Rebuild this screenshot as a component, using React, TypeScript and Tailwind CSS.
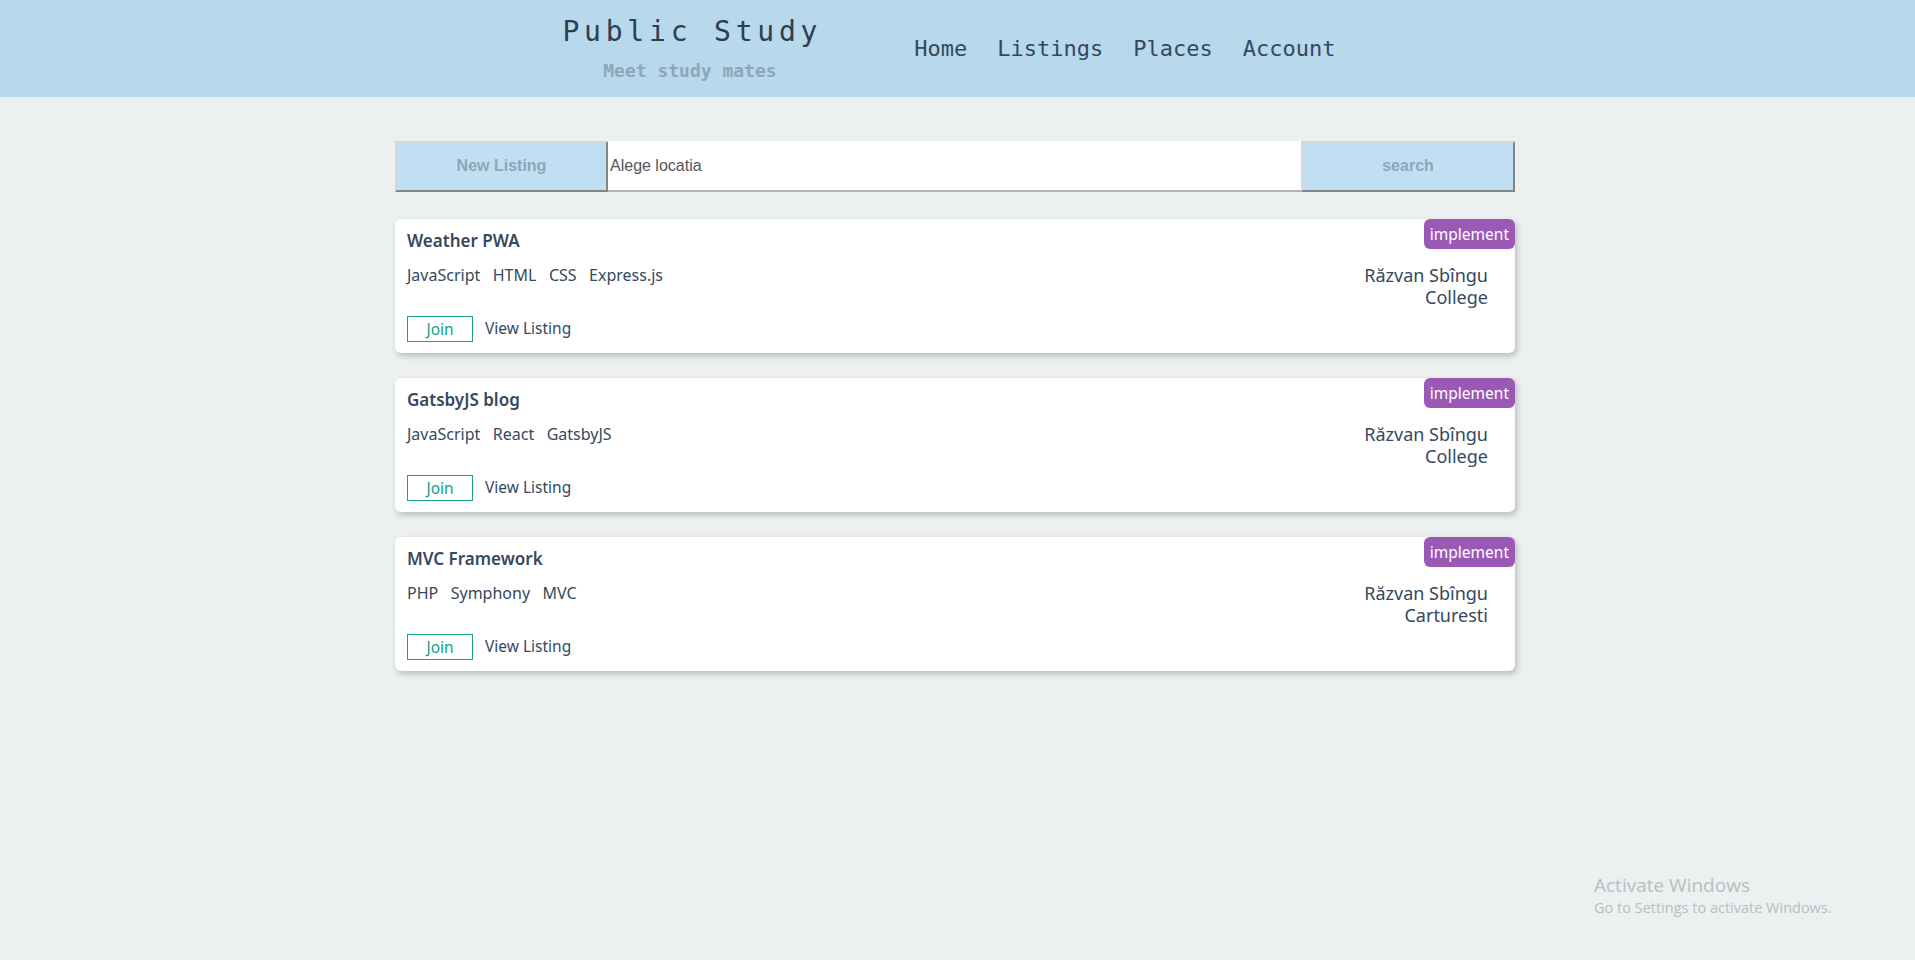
import React from "react";

type Listing = {
  title: string;
  tags: string[];
  author: string;
  place: string;
  kind: string;
};

const listings: Listing[] = [
  {
    title: "Weather PWA",
    tags: ["JavaScript", "HTML", "CSS", "Express.js"],
    author: "Răzvan Sbîngu",
    place: "College",
    kind: "implement",
  },
  {
    title: "GatsbyJS blog",
    tags: ["JavaScript", "React", "GatsbyJS"],
    author: "Răzvan Sbîngu",
    place: "College",
    kind: "implement",
  },
  {
    title: "MVC Framework",
    tags: ["PHP", "Symphony", "MVC"],
    author: "Răzvan Sbîngu",
    place: "Carturesti",
    kind: "implement",
  },
];

const mono = "font-['DejaVu_Sans_Mono','Liberation_Mono',monospace]";
const sans = "font-['Noto_Sans','Open_Sans',sans-serif]";

function ListingCard({ item }: { item: Listing }) {
  return (
    <div className="relative bg-white rounded-md shadow-[2px_3px_6px_rgba(0,0,0,0.22)] pt-[10px] pb-[10px] pl-[12px] pr-[27px] h-[134px]">
      <span className="absolute top-0 right-0 bg-[#9b59b6] text-white text-[15.5px] leading-[30px] px-[6px] rounded-md">
        {item.kind}
      </span>
      <h2 className="text-[17px] leading-[24px] font-semibold text-[#34495e]">
        {item.title}
      </h2>
      <div className="mt-[11px] flex justify-between items-start h-[44px]">
        <div className="flex gap-[12.5px] text-[16px] leading-[22px] text-[#34495e]">
          {item.tags.map((t) => (
            <span key={t}>{t}</span>
          ))}
        </div>
        <div className="text-right text-[18px] leading-[22px] text-[#34495e]">
          <div>{item.author}</div>
          <div>{item.place}</div>
        </div>
      </div>
      <div className="mt-[8px] flex items-center gap-[12px] text-[15.5px]">
        <button className="w-[66px] h-[26px] border border-[#16a085] text-[#16a085] leading-[24px]">
          Join
        </button>
        <a className="text-[#34495e]">View Listing</a>
      </div>
    </div>
  );
}

export default function App() {
  return (
    <div className={`min-h-screen bg-[#ecf0f1] ${sans} relative`}>
      {/* header */}
      <header className="h-[97px] bg-[#b8d8eb] flex items-center justify-center pr-[22px]">
        <div className={`flex flex-col items-center ${mono}`}>
          <h1 className="text-[28px] leading-[28px] tracking-[4.8px] text-[#2c3e50] pl-[4.8px]">
            Public Study
          </h1>
          <p className="mt-[16px] text-[18px] leading-[18px] font-bold text-[#8fa5ba]">
            Meet study mates
          </p>
        </div>
        <nav className={`ml-[92px] flex gap-[30px] text-[22px] text-[#34495e] ${mono}`}>
          <a>Home</a>
          <a>Listings</a>
          <a>Places</a>
          <a>Account</a>
        </nav>
      </header>

      <div className="flex justify-center pr-[5px]">
        <main className="w-[1120px] pt-[44px]">
          {/* search bar */}
          <div className="flex h-[51px] font-['Liberation_Sans',Arial,sans-serif]">
            <button className="w-[213px] bg-[#c1dff3] border-2 border-t-[#d6d6d6] border-l-[#d6d6d6] border-b-[#858585] border-r-[#858585] text-[16px] font-bold text-[#8fa5ba] pb-[2px]">
              New Listing
            </button>
            <input
              className="flex-1 bg-white border-b-2 border-[#b4b4b4] px-[2px] text-[16px] text-[#555] outline-none"
              defaultValue="Alege locatia"
            />
            <button className="w-[214px] bg-[#c1dff3] border-2 border-t-[#d6d6d6] border-l-[#d6d6d6] border-b-[#858585] border-r-[#858585] text-[16px] font-bold text-[#8fa5ba] pb-[2px]">
              search
            </button>
          </div>

          {/* listings */}
          <div className="mt-[27px] flex flex-col gap-[25px]">
            {listings.map((l) => (
              <ListingCard key={l.title} item={l} />
            ))}
          </div>
        </main>
      </div>

      {/* windows watermark */}
      <div className="absolute left-[1594px] top-[873px] text-[#b9bdbf] font-['Open_Sans',sans-serif]">
        <div className="text-[19px] leading-[24px]">Activate Windows</div>
        <div className="text-[14.5px] leading-[22px]">Go to Settings to activate Windows.</div>
      </div>
    </div>
  );
}
